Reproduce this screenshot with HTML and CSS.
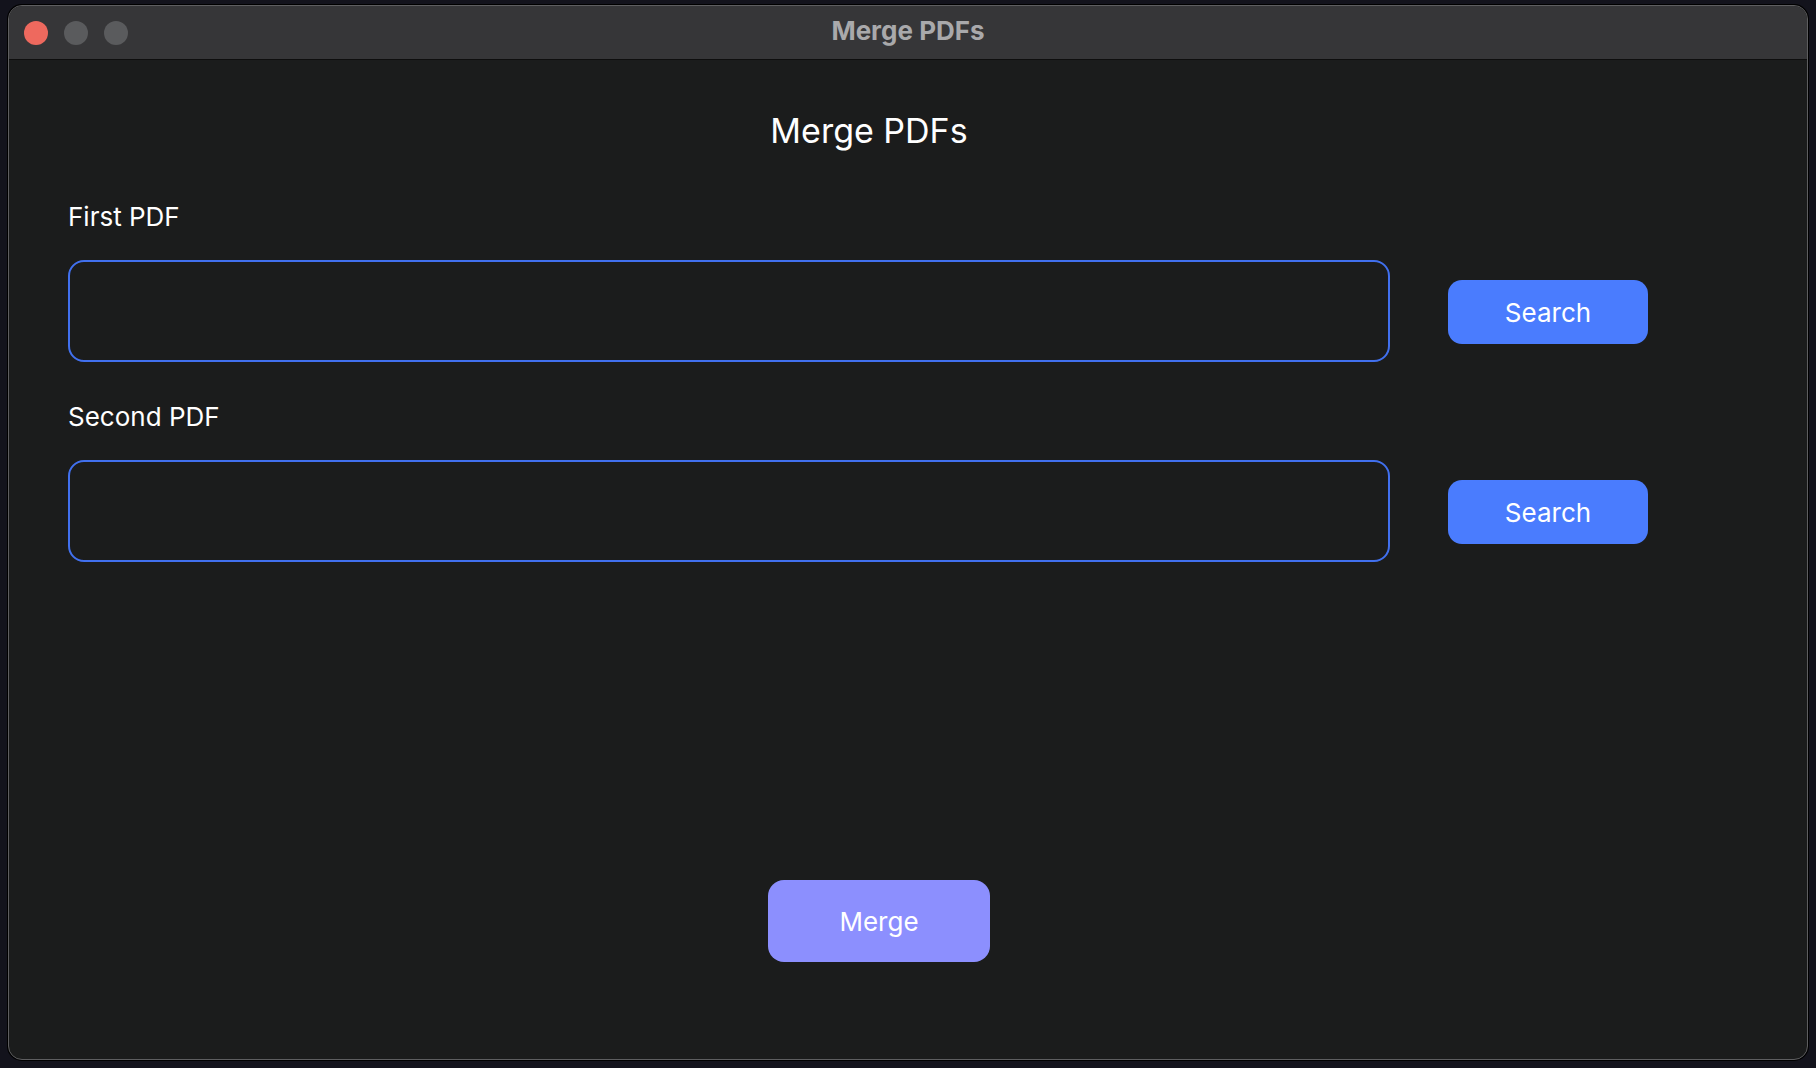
FILE: index.html
```html
<!DOCTYPE html>
<html>
<head>
<meta charset="utf-8">
<title>Merge PDFs</title>
<link rel="stylesheet" href="styles.css">
</head>
<body>
<div class="window">
  <div class="titlebar">
    <div class="lights">
      <span class="light red"></span>
      <span class="light gray"></span>
      <span class="light gray"></span>
    </div>
    <div class="title">Merge PDFs</div>
    <div></div>
  </div>
  <div class="content">
    <h1 class="heading">Merge PDFs</h1>
    <div class="field">
      <label class="label">First PDF</label>
      <div class="row">
        <div class="input"></div>
        <button class="search">Search</button>
      </div>
    </div>
    <div class="field">
      <label class="label">Second PDF</label>
      <div class="row">
        <div class="input"></div>
        <button class="search">Search</button>
      </div>
    </div>
    <div class="actions">
      <button class="merge">Merge</button>
    </div>
  </div>
</div>
</body>
</html>
```
FILE: styles.css
```css
html, body {
  margin: 0;
  padding: 0;
  height: 100%;
}
body {
  background: #13131c;
  font-family: Inter, "Liberation Sans", sans-serif;
  padding: 5px 8px 0 8px;
  box-sizing: border-box;
}
.window {
  height: 1053px;
  border: 1px solid #5e5e60;
  box-shadow: 0 0 0 1px #000;
  border-radius: 14px;
  overflow: hidden;
  background: #1b1c1c;
  display: flex;
  flex-direction: column;
}
.titlebar {
  height: 53px;
  background: #363638;
  border-bottom: 1px solid #0e0e0e;
  display: grid;
  grid-template-columns: 1fr auto 1fr;
  align-items: center;
}
.lights {
  display: flex;
  gap: 16px;
  padding-left: 15px;
}
.light {
  width: 24px;
  height: 24px;
  border-radius: 50%;
  display: block;
}
.red { background: #ee695e; }
.gray { background: #5a5b5d; }
.title {
  font-weight: 700;
  font-size: 26px;
  line-height: 26px;
  color: #a9a9ab;
  padding-bottom: 3px;
}
.content {
  flex: 1;
  padding: 53px 0 0 59px;
  display: flex;
  flex-direction: column;
}
.heading {
  margin: 0;
  font-weight: 400;
  font-size: 34px;
  line-height: 35px;
  color: #ffffff;
  text-align: center;
  padding-right: 137px;
}
.field {
  display: flex;
  flex-direction: column;
}
.heading + .field { margin-top: 56px; }
.field + .field { margin-top: 42px; }
.label {
  font-size: 26px;
  line-height: 26px;
  color: #ffffff;
}
.row {
  display: flex;
  align-items: center;
  gap: 58px;
  margin-top: 30px;
}
.input {
  width: 1322px;
  height: 102px;
  box-sizing: border-box;
  border: 2px solid #4170ee;
  border-radius: 16px;
}
.search {
  width: 200px;
  height: 64px;
  border: none;
  border-radius: 14px;
  background: #4a7cfe;
  color: #ffffff;
  font-family: Inter, "Liberation Sans", sans-serif;
  font-size: 26px;
  padding: 0;
  margin-top: 2px;
}
.actions {
  display: flex;
  justify-content: center;
  margin-top: 318px;
  padding-right: 117px;
}
.merge {
  width: 222px;
  height: 82px;
  border: none;
  border-radius: 16px;
  background: #8c8ffe;
  color: #ffffff;
  font-family: Inter, "Liberation Sans", sans-serif;
  font-size: 26px;
  padding: 0;
}
```
